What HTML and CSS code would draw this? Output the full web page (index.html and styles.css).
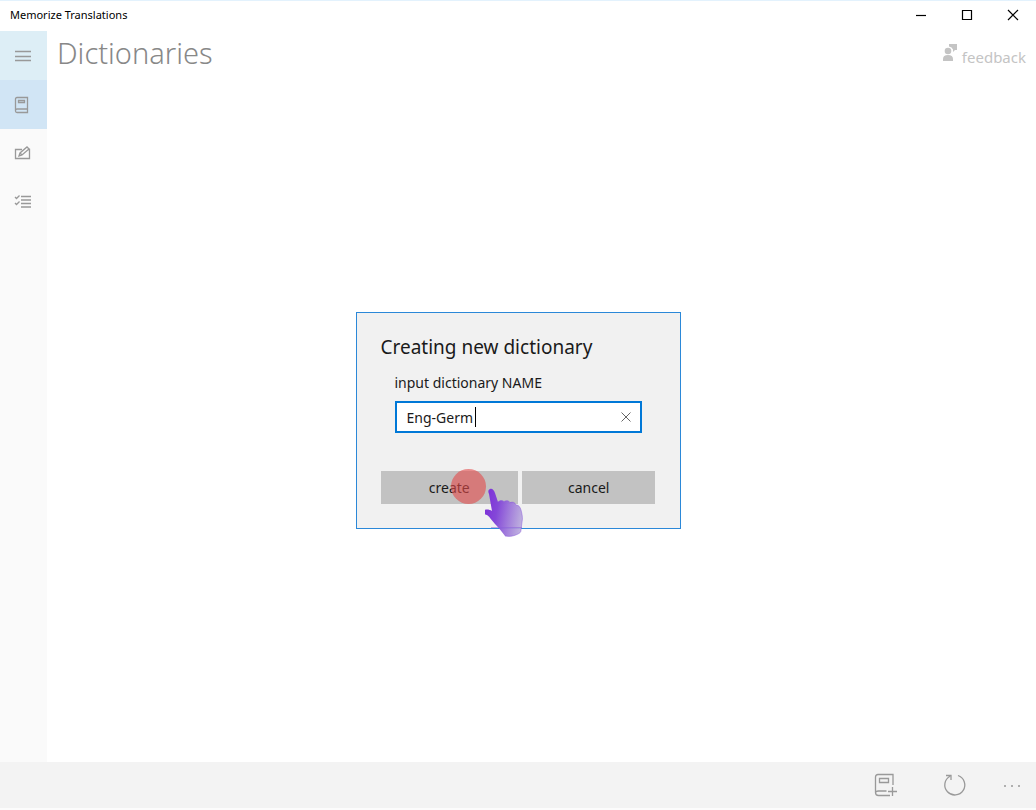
FILE: index.html
```html
<!DOCTYPE html>
<html lang="en">
<head>
  <meta charset="UTF-8">
  <meta name="viewport" content="width=device-width, initial-scale=1.0">
  <title>Memorize Translations</title>
  <link rel="stylesheet" href="styles.css">
</head>
<body>

  <header class="titlebar">
    <span class="app-name">Memorize Translations</span>
    <div class="window-buttons">
      <button type="button" aria-label="Minimize">
        <svg width="12" height="12" viewBox="0 0 12 12"><path d="M1 6.5h10"/></svg>
      </button>
      <button type="button" aria-label="Maximize">
        <svg width="12" height="12" viewBox="0 0 12 12"><path d="M1.5 1.5h9v9h-9z"/></svg>
      </button>
      <button type="button" aria-label="Close">
        <svg width="12" height="12" viewBox="0 0 12 12"><path d="M1 1l10 10M11 1L1 11"/></svg>
      </button>
    </div>
  </header>

  <div class="workspace">
    <nav class="sidebar">
      <button type="button" class="nav-item menu" aria-label="Menu">
        <svg width="18" height="18" viewBox="0 0 18 18"><path d="M1 4.5h16M1 9.5h16M1 13.5h16"/></svg>
      </button>
      <button type="button" class="nav-item active" aria-label="Dictionaries">
        <svg width="18" height="18" viewBox="0 0 18 18"><path d="M13.500 13V1.500H3Q1.500 1.500 1.500 3v12q0 1.500 1.500 1.500h10.500V13H3q-1.500 0-1.500 1.500"/><path d="M4.500 4.500h6v2h-6z"/></svg>
      </button>
      <button type="button" class="nav-item" aria-label="Edit">
        <svg width="18" height="18" viewBox="0 0 18 18"><path d="M8 5.500H1.500v9h14v-9H14"/><path d="M5 12l1-3 7-6 2 2-7 6zM6 9l2 2"/></svg>
      </button>
      <button type="button" class="nav-item" aria-label="Tests">
        <svg width="18" height="18" viewBox="0 0 18 18"><path d="M7 4.500h10M7 8h10M7 11.500h10M7 15h10"/><path d="M1 5l1.500 1.500L5.500 3.500M1 11l1.500 1.500L5.500 9.500"/></svg>
      </button>
    </nav>

    <main class="content">
      <h1>Dictionaries</h1>
      <a href="#" class="feedback">
        <svg width="16" height="18" viewBox="0 0 16 18"><circle cx="6" cy="8" r="3.300"/><path d="M1 18v-2q0-4 5-4t5 4v2zM7 1h8v6h-2l-2 2V6.500Q10 4 7 3.500z"/></svg>
        <span>feedback</span>
      </a>
    </main>

    <div class="overlay">
      <form class="dialog" role="dialog" aria-labelledby="dialogTitle">
        <h2 id="dialogTitle">Creating new dictionary</h2>
        <div class="field">
          <label for="dictionaryName">input dictionary NAME</label>
          <div class="text-box">
            <input type="text" id="dictionaryName" name="dictionaryName" value="Eng-Germ" autocomplete="off" spellcheck="false">
            <span class="caret"></span>
            <button type="button" class="clear" aria-label="Clear">
              <svg width="10" height="10" viewBox="0 0 10 10"><path d="M.5.5l9 9M9.500.5l-9 9"/></svg>
            </button>
          </div>
        </div>
        <div class="actions">
          <button type="button">create</button>
          <button type="button">cancel</button>
        </div>
        <span class="tap"></span>
        <svg class="hand" width="40" height="50" viewBox="0 0 40 50">
          <defs>
            <linearGradient id="handFill" x1="0" y1="0.400" x2="1" y2="0.600">
              <stop offset="0" stop-color="#7d2fd8"/>
              <stop offset="0.350" stop-color="#8448d8"/>
              <stop offset="1" stop-color="#b8a8dc" stop-opacity="0.900"/>
            </linearGradient>
          </defs>
          <path class="palm" d="M5 1C7 0 9 2 10 5l3 9c2-2 4-2 6-0.500 2-1.500 5-1 6 1 3-1 5 0 6 2.500 3 0 4 2 5 5 1 4 2 8 1 12l-1 8c0 2-1 3-3 4-4 2-8 3-13 2-3-4-6-8-10-12-3-3-5-7-8-9-3-1-4-2-4-4 2-2 6-2 9 0L4 6C3 4 3 2 5 1z"/>
          <path class="edge" d="M13 14c2-2 4-2 6-0.500 2-1.500 5-1 6 1 3-1 5 0 6 2.500 3 0 4 2 5 5 1 4 2 8 1 12l-1 8c0 2-1 3-3 4-4 2-8 3-13 2"/>
          <path class="edge" d="M6 39.500h31"/>
        </svg>
      </form>
    </div>
  </div>

  <footer class="command-bar">
    <button type="button" aria-label="Add dictionary">
      <svg width="24" height="24" viewBox="0 0 24 24"><path d="M19 12V1.500H4Q1.500 1.500 1.500 4v15.500q0 3 3 3H16M1.500 20q0-2 3-2h8"/><path d="M5.500 5.500h9v4h-9zM14 18.500h9M18.500 14v9"/></svg>
    </button>
    <button type="button" aria-label="Refresh">
      <svg width="24" height="24" viewBox="0 0 24 24"><path d="M15 2.500A10 10 0 1 1 7 3.200M3 2.500h5V7"/></svg>
    </button>
    <button type="button" aria-label="More">
      <svg width="18" height="18" viewBox="0 0 18 18"><path d="M1 10h2M8 10h2M15 10h2"/></svg>
    </button>
  </footer>

</body>
</html>
```
FILE: styles.css
```css
/* General Styles */
* {
  box-sizing: border-box;
}

body {
  font-family: "Noto Sans", "Open Sans", sans-serif;
  background-color: #fff;
  color: #1a1a1a;
  margin: 0;
  height: 100vh;
  display: flex;
  flex-direction: column;
  border-top: 1px solid #e3f2fd;
}

button,
input {
  font-family: inherit;
  color: inherit;
  border: none;
  padding: 0;
  margin: 0;
  background: none;
}

button {
  display: flex;
  justify-content: center;
  align-items: center;
}

svg {
  display: block;
  fill: none;
  stroke: currentColor;
}

/* Title bar */
.titlebar {
  display: flex;
  justify-content: space-between;
  height: 30px;
  padding-left: 10px;
  color: #000;
}

.app-name {
  font-size: 11px;
  line-height: 28px;
}

.window-buttons {
  display: flex;
}

.window-buttons button {
  width: 46px;
  height: 28px;
}

.window-buttons path {
  stroke-width: 1.2;
}

/* Work area */
.workspace {
  position: relative;
  flex: 1;
  display: flex;
}

.sidebar {
  width: 47px;
  background-color: #fafafa;
}

.nav-item {
  width: 100%;
  height: 48px;
  padding-right: 2px;
  color: #999;
}

.nav-item.menu {
  height: 49px;
  background-color: #ddeef6;
}

.nav-item.active {
  height: 49px;
  background-color: #d1e5f5;
}

.sidebar path,
.command-bar path {
  stroke-width: 1.3;
}

.content {
  flex: 1;
  display: flex;
  justify-content: space-between;
  align-items: flex-start;
  padding: 0 10px;
}

h1 {
  margin: 0;
  font-size: 29px;
  line-height: 44px;
  font-weight: 300;
  color: #888;
}

.feedback {
  display: flex;
  gap: 4px;
  margin-top: 12px;
  font-size: 15px;
  line-height: 28px;
  color: #c4c4c4;
  text-decoration: none;
}

.feedback svg {
  fill: currentColor;
  stroke: none;
}

/* Dialog */
.overlay {
  position: absolute;
  inset: 0 0 -48px 0;
  display: flex;
  justify-content: center;
  align-items: center;
}

.dialog {
  position: relative;
  width: 325px;
  padding: 20px 24px 24px;
  background-color: #f1f1f1;
  border: 1px solid #2b88d8;
}

h2 {
  margin: 0;
  font-size: 19px;
  line-height: 28px;
  font-weight: 400;
}

.field {
  padding: 12px 14px 0;
}

.field label {
  display: block;
  font-size: 14px;
  line-height: 20px;
}

.text-box {
  position: relative;
  display: flex;
  margin-top: 8px;
  height: 32px;
  background-color: #fff;
  border: 2px solid #0078d7;
}

.text-box input {
  flex: 1;
  min-width: 0;
  padding-left: 10px;
  font-size: 14px;
  outline: none;
}

.caret {
  position: absolute;
  left: 78px;
  top: 4px;
  width: 1px;
  height: 20px;
  background-color: #000;
}

.clear {
  width: 28px;
  color: #666;
}

.actions {
  display: grid;
  grid-template-columns: 34fr 33fr;
  gap: 4px;
  margin-top: 38px;
}

.actions button {
  height: 33px;
  background-color: #c2c2c2;
  font-size: 14px;
}

/* Tap marker and pointer */
.tap {
  position: absolute;
  left: 94px;
  top: 156px;
  width: 35px;
  height: 35px;
  border-radius: 50%;
  background-color: rgba(226, 74, 74, 0.6);
}

.hand {
  position: absolute;
  left: 128px;
  top: 175px;
}

.hand .palm {
  fill: url(#handFill);
  stroke: none;
}

.hand .edge {
  stroke: #8a5cdc;
  stroke-opacity: 0.5;
}

/* Bottom command bar */
.command-bar {
  display: flex;
  justify-content: flex-end;
  height: 48px;
  padding-right: 1px;
  background-color: #f3f3f3;
  border-bottom: 2px solid #fcfcfc;
  color: #999;
}

.command-bar button {
  width: 69px;
}

.command-bar button:last-child {
  width: 46px;
}
```
